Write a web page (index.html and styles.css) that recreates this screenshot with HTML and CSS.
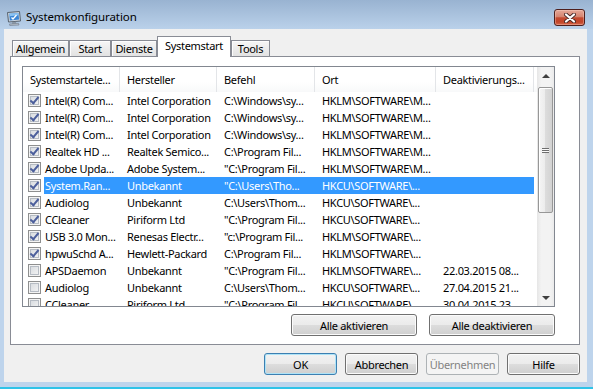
FILE: index.html
```html
<!DOCTYPE html>
<html lang="de">
<head>
    <meta charset="UTF-8">
    <title>Systemkonfiguration</title>
    <link rel="stylesheet" href="styles.css">
</head>
<body>

    <div class="window">
        <div class="titlebar">
            <svg class="app-icon" width="16" height="16" viewBox="0 0 16 16">
                <path d="M1.5 2.5 L13.5 1.5 L14.5 11 L2.5 12 Z" fill="#cfd6de" stroke="#56626f"/>
                <path d="M3.2 3.8 L12.4 3 L13.1 9.6 L3.9 10.4 Z" fill="#3a86d6"/>
                <path d="M3.2 3.8 L12.4 3 L12.6 5.2 L3.5 6.3 Z" fill="#8cc3f2"/>
                <path d="M5.5 7.5 L7 9 L10.5 5" fill="none" stroke="#fff" stroke-width="1.3"/>
                <path d="M6 12 L10 11.7 L10.4 13.6 L6.2 13.9 Z" fill="#8a96a3"/>
                <path d="M3.5 14 L12.5 13.3 L13 15 L3.8 15.5 Z" fill="#b8c1cb" stroke="#6a7684" stroke-width="0.6"/>
            </svg>
            <span class="title">Systemkonfiguration</span>
            <div class="close">
                <svg width="12" height="10" viewBox="0 0 12 10">
                    <path d="M2 1.5 L10 8.5 M10 1.5 L2 8.5" stroke="#4a2a28" stroke-width="4" stroke-linecap="round"/>
                    <path d="M2 1.5 L10 8.5 M10 1.5 L2 8.5" stroke="#fff" stroke-width="2.2" stroke-linecap="round"/>
                </svg>
            </div>
        </div>

        <div class="client">
            <div class="tabs">
                <div class="tab tab-allgemein">Allgemein</div>
                <div class="tab tab-start">Start</div>
                <div class="tab tab-dienste">Dienste</div>
                <div class="tab tab-systemstart active">Systemstart</div>
                <div class="tab tab-tools">Tools</div>
            </div>

            <div class="page">
                <div class="list">
                    <div class="list-main">
                        <div class="lv-head">
                            <div class="hcell c1">Systemstartele...</div>
                            <div class="hcell c2">Hersteller</div>
                            <div class="hcell c3">Befehl</div>
                            <div class="hcell c4">Ort</div>
                            <div class="hcell c5">Deaktivierungs...</div>
                        </div>

                        <div class="row">
                            <div class="cb-cell"><span class="check on"></span></div>
                            <div class="name">Intel(R) Com...</div>
                            <div class="cell c2">Intel Corporation</div>
                            <div class="cell c3">C:\Windows\sy...</div>
                            <div class="cell c4">HKLM\SOFTWARE\M...</div>
                            <div class="cell c5"></div>
                        </div>
                        <div class="row">
                            <div class="cb-cell"><span class="check on"></span></div>
                            <div class="name">Intel(R) Com...</div>
                            <div class="cell c2">Intel Corporation</div>
                            <div class="cell c3">C:\Windows\sy...</div>
                            <div class="cell c4">HKLM\SOFTWARE\M...</div>
                            <div class="cell c5"></div>
                        </div>
                        <div class="row">
                            <div class="cb-cell"><span class="check on"></span></div>
                            <div class="name">Intel(R) Com...</div>
                            <div class="cell c2">Intel Corporation</div>
                            <div class="cell c3">C:\Windows\sy...</div>
                            <div class="cell c4">HKLM\SOFTWARE\M...</div>
                            <div class="cell c5"></div>
                        </div>
                        <div class="row">
                            <div class="cb-cell"><span class="check on"></span></div>
                            <div class="name">Realtek HD ...</div>
                            <div class="cell c2">Realtek Semico...</div>
                            <div class="cell c3">C:\Program Fil...</div>
                            <div class="cell c4">HKLM\SOFTWARE\M...</div>
                            <div class="cell c5"></div>
                        </div>
                        <div class="row">
                            <div class="cb-cell"><span class="check on"></span></div>
                            <div class="name">Adobe Upda...</div>
                            <div class="cell c2">Adobe System...</div>
                            <div class="cell c3">"C:\Program Fil...</div>
                            <div class="cell c4">HKLM\SOFTWARE\M...</div>
                            <div class="cell c5"></div>
                        </div>
                        <div class="row sel">
                            <div class="cb-cell"><span class="check on"></span></div>
                            <div class="name">System.Ran...</div>
                            <div class="cell c2">Unbekannt</div>
                            <div class="cell c3">"C:\Users\Tho...</div>
                            <div class="cell c4">HKCU\SOFTWARE\...</div>
                            <div class="cell c5"></div>
                        </div>
                        <div class="row">
                            <div class="cb-cell"><span class="check on"></span></div>
                            <div class="name">Audiolog</div>
                            <div class="cell c2">Unbekannt</div>
                            <div class="cell c3">C:\Users\Thom...</div>
                            <div class="cell c4">HKCU\SOFTWARE\...</div>
                            <div class="cell c5"></div>
                        </div>
                        <div class="row">
                            <div class="cb-cell"><span class="check on"></span></div>
                            <div class="name">CCleaner</div>
                            <div class="cell c2">Piriform Ltd</div>
                            <div class="cell c3">"C:\Program Fil...</div>
                            <div class="cell c4">HKCU\SOFTWARE\...</div>
                            <div class="cell c5"></div>
                        </div>
                        <div class="row">
                            <div class="cb-cell"><span class="check on"></span></div>
                            <div class="name">USB 3.0 Mon...</div>
                            <div class="cell c2">Renesas Electr...</div>
                            <div class="cell c3">"c:\Program Fil...</div>
                            <div class="cell c4">HKLM\SOFTWARE\...</div>
                            <div class="cell c5"></div>
                        </div>
                        <div class="row">
                            <div class="cb-cell"><span class="check on"></span></div>
                            <div class="name">hpwuSchd A...</div>
                            <div class="cell c2">Hewlett-Packard</div>
                            <div class="cell c3">C:\Program Fil...</div>
                            <div class="cell c4">HKLM\SOFTWARE\...</div>
                            <div class="cell c5"></div>
                        </div>
                        <div class="row">
                            <div class="cb-cell"><span class="check"></span></div>
                            <div class="name">APSDaemon</div>
                            <div class="cell c2">Unbekannt</div>
                            <div class="cell c3">"C:\Program Fil...</div>
                            <div class="cell c4">HKLM\SOFTWARE\...</div>
                            <div class="cell c5">22.03.2015 08...</div>
                        </div>
                        <div class="row">
                            <div class="cb-cell"><span class="check"></span></div>
                            <div class="name">Audiolog</div>
                            <div class="cell c2">Unbekannt</div>
                            <div class="cell c3">C:\Users\Thom...</div>
                            <div class="cell c4">HKCU\SOFTWARE\...</div>
                            <div class="cell c5">27.04.2015 21...</div>
                        </div>
                        <div class="row">
                            <div class="cb-cell"><span class="check"></span></div>
                            <div class="name">CCleaner</div>
                            <div class="cell c2">Piriform Ltd</div>
                            <div class="cell c3">"C:\Program Fil...</div>
                            <div class="cell c4">HKCU\SOFTWARE\...</div>
                            <div class="cell c5">30.04.2015 23...</div>
                        </div>
                    </div>

                    <div class="scrollbar">
                        <div class="sb-btn"><span class="arrow-up"></span></div>
                        <div class="sb-track">
                            <div class="thumb"><span class="grip"></span></div>
                        </div>
                        <div class="sb-btn"><span class="arrow-down"></span></div>
                    </div>
                </div>

                <div class="page-buttons">
                    <button class="btn wide">Alle aktivieren</button>
                    <button class="btn wide">Alle deaktivieren</button>
                </div>
            </div>

            <div class="dialog-buttons">
                <button class="btn default">OK</button>
                <button class="btn">Abbrechen</button>
                <button class="btn" disabled>Übernehmen</button>
                <button class="btn">Hilfe</button>
            </div>
        </div>
    </div>

</body>
</html>
```

FILE: styles.css
```css
body {
    margin: 0;
    font-family: "Noto Sans", "Open Sans", sans-serif;
    font-size: 11px;
    letter-spacing: -0.3px;
    color: #000;
    background-color: #2fc3e8;
}

.window {
    width: 593px;
    height: 387px;
    background-color: #bed4ec;
    display: flex;
    flex-direction: column;
}

/* Title bar */
.titlebar {
    height: 29px;
    flex: none;
    display: flex;
    align-items: flex-start;
    padding-left: 6px;
    background: linear-gradient(#99b3d1, #bad1ea);
}

.app-icon {
    margin-top: 10px;
    margin-right: 4px;
}

.title {
    margin-top: 9px;
    line-height: 16px;
    font-size: 11.5px;
    letter-spacing: -0.1px;
}

.close {
    margin-left: auto;
    margin-right: 8px;
    margin-top: 9px;
    width: 31px;
    height: 17px;
    box-sizing: border-box;
    border: 1px solid #4e1f1c;
    border-radius: 3px;
    background: linear-gradient(#e6a898, #d58470 45%, #c34a31 52%, #c24529 80%, #d66a4f);
    box-shadow: inset 0 0 0 1px rgba(255, 220, 210, 0.35);
    display: flex;
    align-items: center;
    justify-content: center;
}

/* Client area */
.client {
    flex: none;
    height: 353px;
    margin: 0 6px 0 4px;
    padding: 7px 7px 0 6px;
    box-sizing: border-box;
    background-color: #f0f0f0;
    display: flex;
    flex-direction: column;
}

.tabs {
    display: flex;
    align-items: flex-end;
    margin-left: 2px;
}

.tab {
    height: 16px;
    box-sizing: border-box;
    border: 1px solid #898c95;
    border-bottom: 0;
    text-align: center;
    line-height: 15px;
    white-space: nowrap;
    background: linear-gradient(#f6f6f6, #ececec 50%, #e2e2e2);
    box-shadow: inset 1px 1px 0 #fdfdfd;
}

.tab-allgemein { width: 57px; }
.tab-start { width: 42px; }
.tab-dienste { width: 46px; }
.tab-systemstart { width: 74px; }
.tab-tools { width: 39px; }

.tab.active {
    height: 21px;
    line-height: 18px;
    margin-bottom: -1px;
    background: #fff;
    box-shadow: none;
    position: relative;
    z-index: 1;
}

.page {
    height: 289px;
    box-sizing: border-box;
    border: 1px solid #898c95;
    background-color: #fff;
    padding: 9px 24px 8px 11px;
    display: flex;
    flex-direction: column;
}

/* List view */
.list {
    height: 241px;
    flex: none;
    box-sizing: border-box;
    border: 1px solid #828790;
    display: flex;
}

.list-main {
    flex: 1;
    overflow: hidden;
}

.lv-head {
    display: flex;
    height: 25px;
    background: linear-gradient(#fff 60%, #f8f9fa);
}

.hcell {
    box-sizing: border-box;
    padding-left: 7px;
    line-height: 25px;
    border-right: 1px solid #e3e5e8;
    white-space: nowrap;
    overflow: hidden;
}

.c1 { width: 97px; }
.c2 { width: 97px; }
.c3 { width: 98px; }
.c4 { width: 121px; }
.c5 { width: 98px; }

.row {
    display: flex;
    height: 17px;
    line-height: 17px;
    white-space: nowrap;
}

.cb-cell {
    width: 21px;
    flex: none;
    box-sizing: border-box;
    padding-left: 5px;
    display: flex;
    align-items: center;
}

.name {
    width: 76px;
    flex: none;
    box-sizing: border-box;
    padding-left: 1px;
    overflow: hidden;
}

.cell {
    flex: none;
    box-sizing: border-box;
    padding-left: 7px;
    overflow: hidden;
}

.row.sel .name,
.row.sel .cell {
    background-color: #3399ff;
    color: #fff;
}

.check {
    width: 13px;
    height: 13px;
    box-sizing: border-box;
    border: 1px solid #8e8f8f;
    background: linear-gradient(135deg, #d3d7dc, #f7f7f7);
    box-shadow: inset 0 0 0 1px #f4f4f4, inset 0 0 0 2px #b6bcc4;
    position: relative;
}

.check.on::after {
    content: "";
    position: absolute;
    left: 3px;
    top: 0;
    width: 3px;
    height: 7px;
    border: solid #4c5f9c;
    border-width: 0 2px 2px 0;
    transform: rotate(40deg);
}

/* Scrollbar */
.scrollbar {
    width: 17px;
    flex: none;
    display: flex;
    flex-direction: column;
    background: linear-gradient(90deg, #e6e6e6, #f3f3f3 25%, #f3f3f3 75%, #ebebeb);
}

.sb-btn {
    height: 17px;
    flex: none;
    display: flex;
    align-items: center;
    justify-content: center;
}

.arrow-up {
    border: 4px solid transparent;
    border-top: 0;
    border-bottom-color: #3f3f3f;
}

.arrow-down {
    border: 4px solid transparent;
    border-bottom: 0;
    border-top-color: #3f3f3f;
}

.sb-track {
    flex: 1;
    padding: 3px 1px 0 1px;
}

.thumb {
    height: 126px;
    box-sizing: border-box;
    border: 1px solid #979797;
    border-radius: 2px;
    background: linear-gradient(90deg, #f5f5f5, #ebebeb 50%, #dcdcdc 50%, #d2d2d2);
    box-shadow: inset 1px 1px 0 #fff;
    display: flex;
    align-items: center;
    justify-content: center;
}

.grip {
    width: 7px;
    height: 5px;
    background: repeating-linear-gradient(#6e6e6e 0 1px, #fafafa 1px 2px);
}

/* Buttons */
.btn {
    height: 22px;
    width: 73px;
    box-sizing: border-box;
    border: 1px solid #707070;
    border-radius: 3px;
    padding: 0;
    font: inherit;
    letter-spacing: inherit;
    color: #000;
    background: linear-gradient(#f2f2f2, #ebebeb 50%, #dddddd 50%, #cfcfcf);
    box-shadow: inset 0 0 0 1px #fbfbfb;
}

.btn.wide {
    width: 126px;
}

.btn.default {
    border-color: #3c7fb1;
    box-shadow: inset 0 0 0 1px #aee3f7;
}

.btn:disabled {
    border-color: #adb2b5;
    background: #f4f4f4;
    color: #838383;
    box-shadow: none;
}

.page-buttons {
    margin-top: 7px;
    display: flex;
    justify-content: flex-end;
    gap: 12px;
}

.dialog-buttons {
    margin-top: 8px;
    display: flex;
    justify-content: flex-end;
    gap: 8px;
}
```
